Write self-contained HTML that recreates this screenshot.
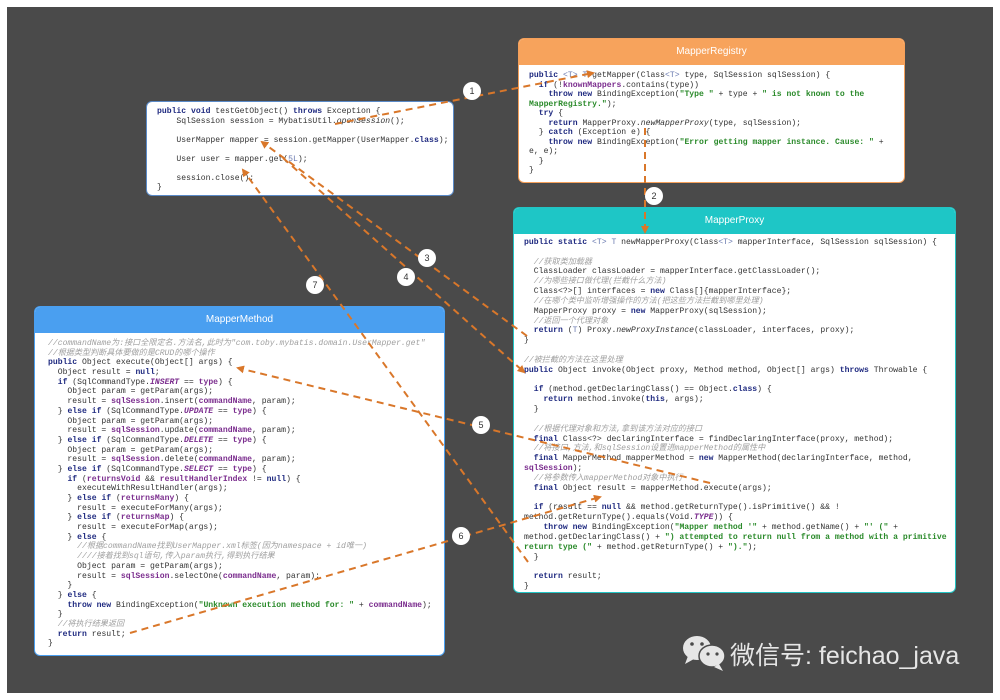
<!DOCTYPE html>
<html><head><meta charset="utf-8"><style>
*{margin:0;padding:0;box-sizing:border-box}
body{width:1000px;height:700px;background:#fff;position:relative;overflow:hidden;font-family:"Liberation Sans","Noto Sans CJK SC",sans-serif}
#bg{position:absolute;left:7px;top:7px;width:986px;height:686px;background:#4a4a4a}
.box{position:absolute;background:#fff;border-radius:6px;overflow:hidden}
.hd{height:26px;line-height:26px;text-align:center;color:#fff;font-size:10px}
pre{font-family:"Liberation Mono","Noto Sans CJK SC",monospace;font-size:8.1px;color:#333;white-space:pre;position:absolute}
.k{color:#1f2a80;font-weight:bold}
.s{color:#2a8a2a;font-weight:bold}
.p{color:#7b2d8e;font-weight:bold}
.c{color:#a0a0a0;font-style:italic}
.t{color:#6a7ab0}
svg{position:absolute;left:0;top:0}
</style></head><body>
<div id="bg"></div>

<div class="box" style="left:146px;top:101px;width:308px;height:95px;border:1.5px solid #5a8ac8">
<pre style="left:10px;top:5px;line-height:9.5px"><span class="k">public void</span> testGetObject() <span class="k">throws</span> Exception {
    SqlSession session = MybatisUtil.<i>openSession</i>();

    UserMapper mapper = session.getMapper(UserMapper.<span class="k">class</span>);

    User user = mapper.get(<span class="t">5L</span>);

    session.close();
}</pre></div>

<div class="box" style="left:518px;top:38px;width:387px;height:145px;border:1.5px solid #f5a05a">
<div class="hd" style="background:#f7a35c">MapperRegistry</div>
<pre style="left:10px;top:32px;line-height:9.5px"><span class="k">public</span> <span class="t">&lt;T&gt;</span> <span class="t">T</span> getMapper(Class<span class="t">&lt;T&gt;</span> type, SqlSession sqlSession) {
  <span class="k">if</span> (!<span class="p">knownMappers</span>.contains(type))
    <span class="k">throw new</span> BindingException(<span class="s">"Type "</span> + type + <span class="s">" is not known to the</span>
<span class="s">MapperRegistry."</span>);
  <span class="k">try</span> {
    <span class="k">return</span> MapperProxy.<i>newMapperProxy</i>(type, sqlSession);
  } <span class="k">catch</span> (Exception e) {
    <span class="k">throw new</span> BindingException(<span class="s">"Error getting mapper instance. Cause: "</span> +
e, e);
  }
}</pre></div>

<div class="box" style="left:513px;top:207px;width:443px;height:386px;border:1.5px solid #22c4c4">
<div class="hd" style="background:#1ec6c6">MapperProxy</div>
<pre style="left:10px;top:30px;line-height:9.83px"><span class="k">public static</span> <span class="t">&lt;T&gt;</span> <span class="t">T</span> newMapperProxy(Class<span class="t">&lt;T&gt;</span> mapperInterface, SqlSession sqlSession) {

  <span class="c">//获取类加载器</span>
  ClassLoader classLoader = mapperInterface.getClassLoader();
  <span class="c">//为哪些接口做代理(拦截什么方法)</span>
  Class&lt;?&gt;[] interfaces = <span class="k">new</span> Class[]{mapperInterface};
  <span class="c">//在哪个类中监听增强操作的方法(把这些方法拦截到哪里处理)</span>
  MapperProxy proxy = <span class="k">new</span> MapperProxy(sqlSession);
  <span class="c">//返回一个代理对象</span>
  <span class="k">return</span> (<span class="t">T</span>) Proxy.<i>newProxyInstance</i>(classLoader, interfaces, proxy);
}

<span class="c">//被拦截的方法在这里处理</span>
<span class="k">public</span> Object invoke(Object proxy, Method method, Object[] args) <span class="k">throws</span> Throwable {

  <span class="k">if</span> (method.getDeclaringClass() == Object.<span class="k">class</span>) {
    <span class="k">return</span> method.invoke(<span class="k">this</span>, args);
  }

  <span class="c">//根据代理对象和方法,拿到该方法对应的接口</span>
  <span class="k">final</span> Class&lt;?&gt; declaringInterface = findDeclaringInterface(proxy, method);
  <span class="c">//将接口,方法,和sqlSession设置进mapperMethod的属性中</span>
  <span class="k">final</span> MapperMethod mapperMethod = <span class="k">new</span> MapperMethod(declaringInterface, method,
<span class="p">sqlSession</span>);
  <span class="c">//将参数传入mapperMethod对象中执行</span>
  <span class="k">final</span> Object result = mapperMethod.execute(args);

  <span class="k">if</span> (result == <span class="k">null</span> &amp;&amp; method.getReturnType().isPrimitive() &amp;&amp; !
method.getReturnType().equals(Void.<i class="p">TYPE</i>)) {
    <span class="k">throw new</span> BindingException(<span class="s">"Mapper method '"</span> + method.getName() + <span class="s">"' ("</span> +
method.getDeclaringClass() + <span class="s">") attempted to return null from a method with a primitive</span>
<span class="s">return type ("</span> + method.getReturnType() + <span class="s">")."</span>);
  }

  <span class="k">return</span> result;
}</pre></div>

<div class="box" style="left:34px;top:306px;width:411px;height:350px;border:1.5px solid #4a9ff0">
<div class="hd" style="background:#4a9ff0">MapperMethod</div>
<pre style="left:13px;top:32px;line-height:9.68px"><span class="c">//commandName为:接口全限定名.方法名,此时为"com.toby.mybatis.domain.UserMapper.get"</span>
<span class="c">//根据类型判断具体要做的是CRUD的哪个操作</span>
<span class="k">public</span> Object execute(Object[] args) {
  Object result = <span class="k">null</span>;
  <span class="k">if</span> (SqlCommandType.<i class="p">INSERT</i> == <span class="p">type</span>) {
    Object param = getParam(args);
    result = <span class="p">sqlSession</span>.insert(<span class="p">commandName</span>, param);
  } <span class="k">else if</span> (SqlCommandType.<i class="p">UPDATE</i> == <span class="p">type</span>) {
    Object param = getParam(args);
    result = <span class="p">sqlSession</span>.update(<span class="p">commandName</span>, param);
  } <span class="k">else if</span> (SqlCommandType.<i class="p">DELETE</i> == <span class="p">type</span>) {
    Object param = getParam(args);
    result = <span class="p">sqlSession</span>.delete(<span class="p">commandName</span>, param);
  } <span class="k">else if</span> (SqlCommandType.<i class="p">SELECT</i> == <span class="p">type</span>) {
    <span class="k">if</span> (<span class="p">returnsVoid</span> &amp;&amp; <span class="p">resultHandlerIndex</span> != <span class="k">null</span>) {
      executeWithResultHandler(args);
    } <span class="k">else if</span> (<span class="p">returnsMany</span>) {
      result = executeForMany(args);
    } <span class="k">else if</span> (<span class="p">returnsMap</span>) {
      result = executeForMap(args);
    } <span class="k">else</span> {
      <span class="c">//根据commandName找到UserMapper.xml标签(因为namespace + id唯一)</span>
      <span class="c">////接着找到sql语句,传入param执行,得到执行结果</span>
      Object param = getParam(args);
      result = <span class="p">sqlSession</span>.selectOne(<span class="p">commandName</span>, param);
    }
  } <span class="k">else</span> {
    <span class="k">throw new</span> BindingException(<span class="s">"Unknown execution method for: "</span> + <span class="p">commandName</span>);
  }
  <span class="c">//将执行结果返回</span>
  <span class="k">return</span> result;
}</pre></div>

<svg width="1000" height="700" viewBox="0 0 1000 700">
<defs><marker id="a" markerWidth="8" markerHeight="8" refX="6" refY="4" orient="auto" markerUnits="userSpaceOnUse"><path d="M0,0 L8,4 L0,8 z" fill="#d9772a"/></marker></defs>
<g stroke="#d9772a" stroke-width="2" stroke-dasharray="7,5" fill="none" marker-end="url(#a)">
<line x1="335" y1="124" x2="593" y2="73"/>
<line x1="645" y1="128" x2="645" y2="232"/>
<line x1="527" y1="336" x2="262" y2="142"/>
<line x1="283" y1="158" x2="524" y2="372"/>
<line x1="710" y1="483" x2="238" y2="368"/>
<line x1="130" y1="633" x2="600" y2="497"/>
<line x1="528" y1="562" x2="243" y2="170"/>
</g>
<g font-family="Liberation Sans" font-size="9" fill="#333" text-anchor="middle">
<circle cx="472" cy="91" r="9" fill="#fff"/><text x="472" y="94">1</text>
<circle cx="654" cy="196" r="9" fill="#fff"/><text x="654" y="199">2</text>
<circle cx="427" cy="258" r="9" fill="#fff"/><text x="427" y="261">3</text>
<circle cx="406" cy="277" r="9" fill="#fff"/><text x="406" y="280">4</text>
<circle cx="481" cy="425" r="9" fill="#fff"/><text x="481" y="428">5</text>
<circle cx="461" cy="536" r="9" fill="#fff"/><text x="461" y="539">6</text>
<circle cx="315" cy="285" r="9" fill="#fff"/><text x="315" y="288">7</text>
</g>
<g fill="#e6e6e6">
<ellipse cx="697" cy="648" rx="14" ry="12"/><path d="M688,656 l-3,8 l9,-5z"/>
<ellipse cx="712" cy="656" rx="13" ry="11" stroke="#4a4a4a" stroke-width="1.5"/><path d="M719,664 l4,7 l-9,-4z"/>
<circle cx="692" cy="644" r="1.8" fill="#4a4a4a"/><circle cx="702" cy="644" r="1.8" fill="#4a4a4a"/>
<circle cx="708" cy="654" r="1.6" fill="#4a4a4a"/><circle cx="717" cy="654" r="1.6" fill="#4a4a4a"/>
</g>
<text x="730" y="664" font-family="Liberation Sans, Noto Sans CJK SC, sans-serif" font-size="25" fill="#e6e6e6">微信号: feichao_java</text>
</svg>
</body></html>
